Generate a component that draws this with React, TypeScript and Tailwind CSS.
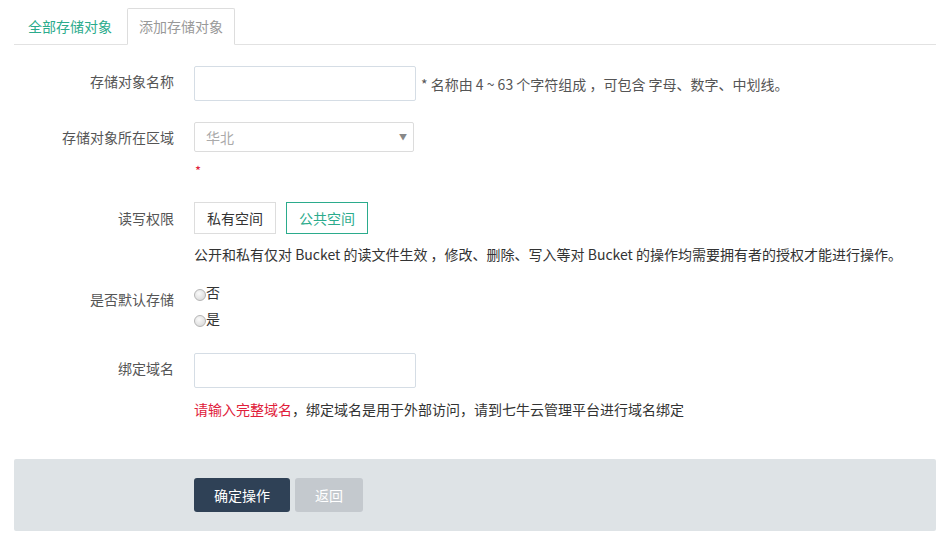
import React from 'react';

const font = { fontFamily: '"Microsoft YaHei", "Noto Sans CJK SC", "Noto Sans", sans-serif' };

function Label({ children, className = '' }: { children: React.ReactNode; className?: string }) {
  return (
    <div className={`w-[160px] shrink-0 text-right text-[14px] text-[#555] leading-[20px] ${className}`}>{children}</div>
  );
}

function Radio({ label }: { label: string }) {
  return (
    <label className="flex items-center h-[26px] text-[14px] text-[#333]">
      <span className="inline-block w-[12px] h-[12px] rounded-full border border-[#b5b5b5] bg-[radial-gradient(circle_at_40%_35%,#fafafa,#d4d4d4)] mt-[4px]"></span>
      <span className="-mt-[2px]">{label}</span>
    </label>
  );
}

export default function App() {
  return (
    <div className="w-[936px] h-[546px] bg-white overflow-hidden" style={font}>
      <div className="pl-[14px]">
        {/* tabs */}
        <div className="flex items-end h-[45px] pt-[8px] border-b border-[#e2e2e2]">
          <div className="h-[36px] px-[14px] flex items-center text-[14px] text-[#2bab8c]">全部存储对象</div>
          <div className="h-[37px] -mb-px ml-px px-[11px] flex items-center text-[14px] text-[#999] bg-white border border-[#ddd] border-b-white rounded-t-[2px]">添加存储对象</div>
        </div>

        {/* name */}
        <div className="flex mt-[21px]">
          <Label className="pt-[5px]">存储对象名称</Label>
          <div className="ml-[20px] flex items-center">
            <input className="w-[222px] h-[35px] border border-[#d5dde5] rounded-[2px] outline-none" />
            <span className="ml-[5px] text-[14px] text-[#555] pt-[1px]">* 名称由 4 ~ 63 个字符组成 ，可包含 字母、数字、中划线。</span>
          </div>
        </div>

        {/* region */}
        <div className="flex mt-[21px]">
          <Label className="pt-[5px]">存储对象所在区域</Label>
          <div className="ml-[20px]">
            <div className="w-[220px] h-[30px] border border-[#dcdcdc] rounded-[2px] flex items-center justify-between pl-[11px] pr-[6px] text-[14px] text-[#aaa]">
              <span>华北</span>
              <span className="text-[8px] text-[#888]">▼</span>
            </div>
            <div className="h-[20px] mt-[9px] pl-[1px] text-[#e0203a] text-[13px] leading-[20px]">*</div>
          </div>
        </div>

        {/* permission */}
        <div className="flex mt-[21px]">
          <Label className="pt-[6px]">读写权限</Label>
          <div className="ml-[20px]">
            <div className="flex gap-[10px]">
              <div className="w-[82px] h-[32px] border border-[#ddd] flex items-center justify-center text-[14px] text-[#333]">私有空间</div>
              <div className="w-[82px] h-[32px] border border-[#2bab8c] flex items-center justify-center text-[14px] text-[#2bab8c]">公共空间</div>
            </div>
            <div className="mt-[10px] text-[14px] text-[#333] leading-[20px]">
              公开和私有仅对 Bucket 的读文件生效 ，修改、删除、写入等对 Bucket 的操作均需要拥有者的授权才能进行操作。
            </div>
          </div>
        </div>

        {/* default */}
        <div className="flex mt-[16px]">
          <Label className="pt-[9px]">是否默认存储</Label>
          <div className="ml-[20px]">
            <Radio label="否" />
            <Radio label="是" />
          </div>
        </div>

        {/* domain */}
        <div className="flex mt-[21px]">
          <Label className="pt-[5px]">绑定域名</Label>
          <div className="ml-[20px]">
            <input className="w-[222px] h-[35px] border border-[#d5dde5] rounded-[2px] outline-none" />
            <div className="mt-[11px] text-[14px] leading-[20px] text-[#333]">
              <span className="text-[#e0203a]">请输入完整域名</span>，绑定域名是用于外部访问，请到七牛云管理平台进行域名绑定
            </div>
          </div>
        </div>

        {/* footer */}
        <div className="mt-[40px] h-[72px] bg-[#dee3e6] rounded-[2px] flex items-center pl-[180px] gap-[5px]">
          <button className="w-[96px] h-[34px] rounded-[3px] bg-[#2f4156] text-white text-[14px]">确定操作</button>
          <button className="w-[68px] h-[34px] rounded-[3px] bg-[#c4c9ce] text-white text-[14px]">返回</button>
        </div>
      </div>
    </div>
  );
}
